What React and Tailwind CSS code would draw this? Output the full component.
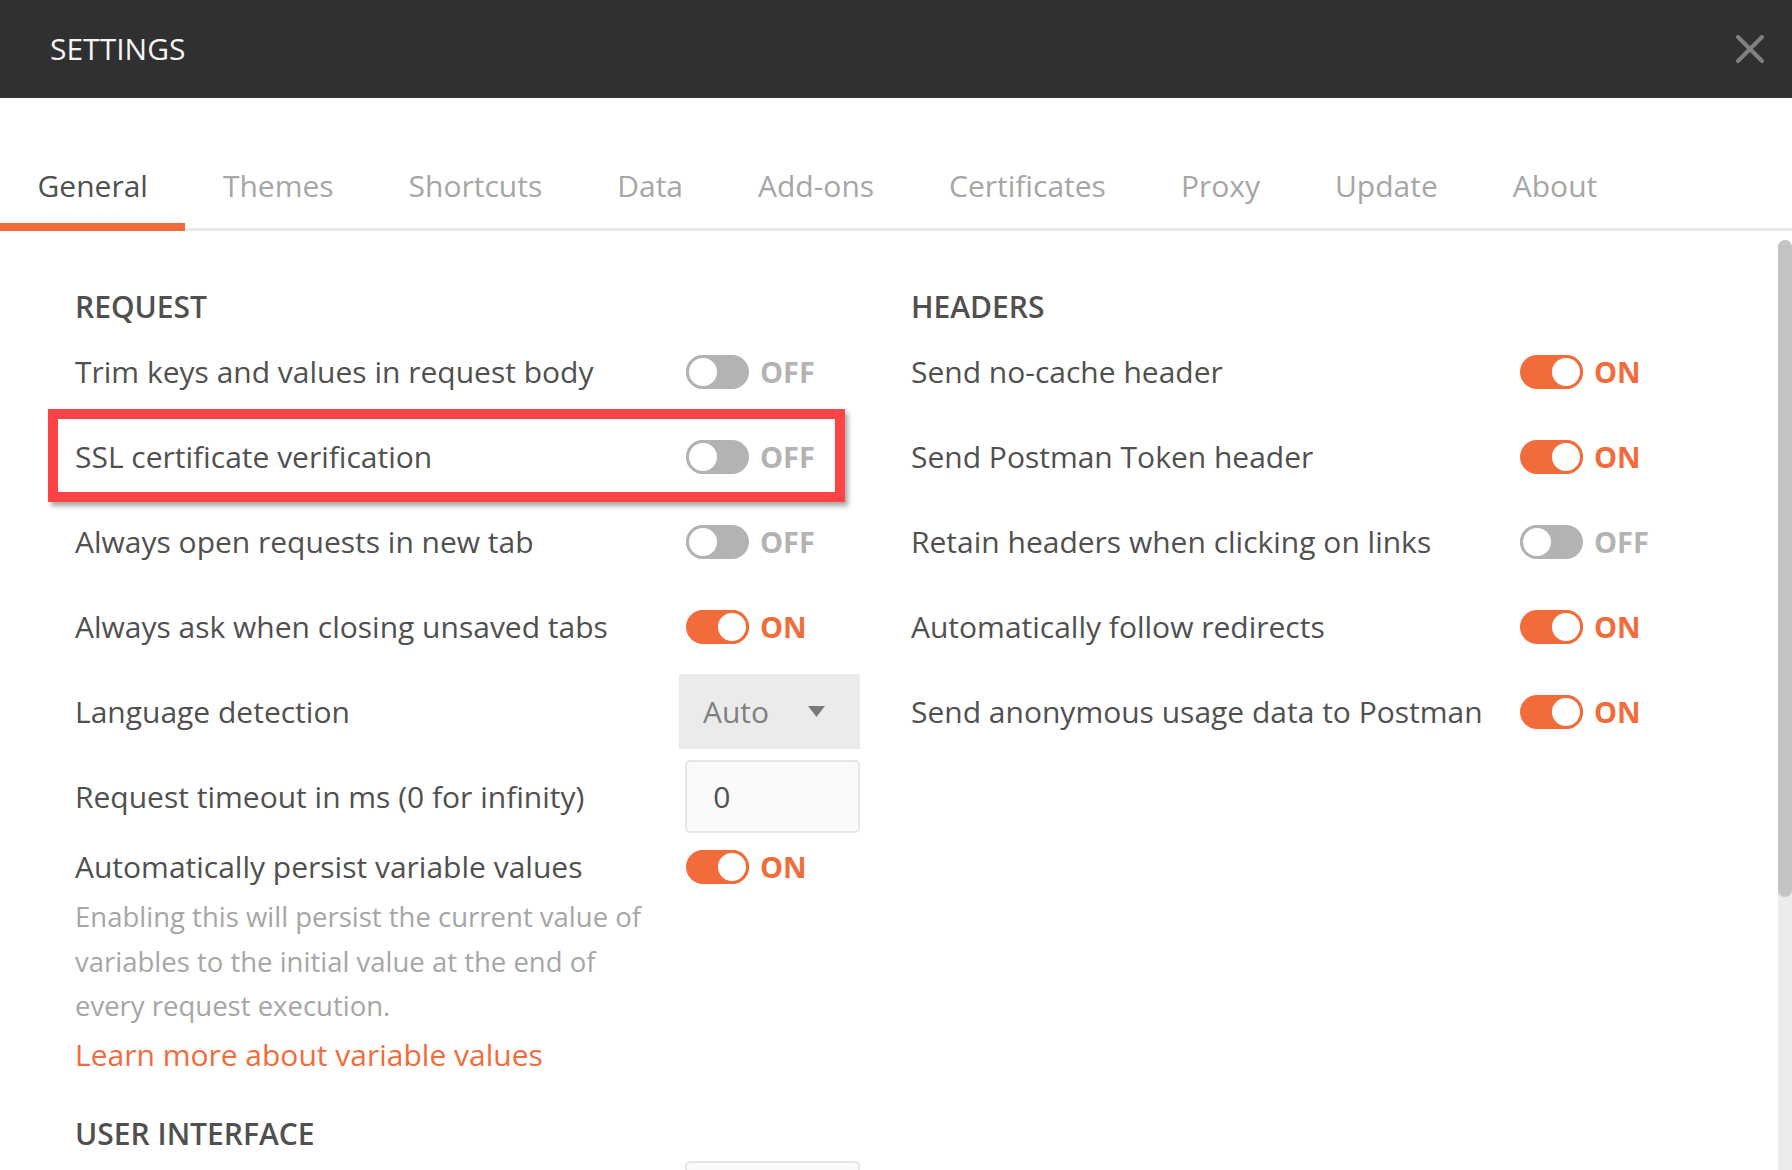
import React from "react";

function Toggle({ on }) {
  return (
    <div className="flex items-center">
      {on ? (
        <div className="flex h-[34px] w-[63px] items-center justify-end rounded-full bg-[#f26b3a]">
          <div className="h-[34px] w-[34px] rounded-full border-[3px] border-[#f26b3a] bg-white" />
        </div>
      ) : (
        <div className="flex h-[34px] w-[63px] items-center justify-start rounded-full bg-[#b3b3b3]">
          <div className="h-[34px] w-[34px] rounded-full border-[3px] border-[#b3b3b3] bg-white" />
        </div>
      )}
      <span
        className={
          "ml-[11px] text-[29px] font-bold leading-none " +
          (on ? "text-[#f26b3a]" : "text-[#b3b3b3]")
        }
      >
        {on ? "ON" : "OFF"}
      </span>
    </div>
  );
}

function LeftRow({ label, children, highlight }) {
  return (
    <div className="relative flex h-[85px] items-center">
      <div className="w-[611px] text-[30px] leading-[40px] text-[#505050]">{label}</div>
      {children}
      {highlight && (
        <div className="pointer-events-none absolute left-[-27px] top-[-5px] h-[93px] w-[797px] border-[10px] border-[#fd4346] shadow-[3px_4px_5px_rgba(0,0,0,0.35)]" />
      )}
    </div>
  );
}

function RightRow({ label, on }) {
  return (
    <div className="flex h-[85px] items-center">
      <div className="w-[609px] text-[30px] leading-[40px] text-[#505050]">{label}</div>
      <Toggle on={on} />
    </div>
  );
}

const tabs = ["General", "Themes", "Shortcuts", "Data", "Add-ons", "Certificates", "Proxy", "Update", "About"];

export default function App() {
  return (
    <div className="h-[1170px] w-[1792px] overflow-hidden bg-white font-['Open_Sans',sans-serif]">
      {/* Title bar */}
      <div className="flex h-[98px] items-center justify-between bg-[#303030] pl-[50px] pr-[27px]">
        <div className="mb-[1px] text-[30px] leading-none text-[#f4f4f4]">SETTINGS</div>
        <svg width="30" height="30" viewBox="0 0 30 30">
          <path d="M3 3 L27 27 M27 3 L3 27" stroke="#818181" strokeWidth="4" strokeLinecap="round" />
        </svg>
      </div>

      {/* Tabs */}
      <div className="flex border-b-[3px] border-[#e8e8e8] pt-[68px]">
        {tabs.map((t, i) => (
          <div
            key={t}
            className={
              "mb-[-3px] px-[37.5px] pb-[17px] text-[30px] leading-[40px] " +
              (i === 0
                ? "border-b-[8px] border-[#f26b3a] text-[#505050]"
                : "border-b-[8px] border-transparent text-[#a6a6a6]")
            }
          >
            {t}
          </div>
        ))}
      </div>

      {/* Body */}
      <div className="flex">
        <div className="flex flex-1 pl-[75px] pt-[56px]">
          {/* Left column */}
          <div className="w-[785px]">
            <div className="text-[30px] font-semibold leading-[40px] text-[#505050]">REQUEST</div>
            <div className="mt-[2px]">
              <LeftRow label="Trim keys and values in request body">
                <Toggle on={false} />
              </LeftRow>
              <LeftRow label="SSL certificate verification" highlight>
                <Toggle on={false} />
              </LeftRow>
              <LeftRow label="Always open requests in new tab">
                <Toggle on={false} />
              </LeftRow>
              <LeftRow label="Always ask when closing unsaved tabs">
                <Toggle on />
              </LeftRow>
              <LeftRow label="Language detection">
                <div className="ml-[-7px] flex h-[75px] w-[181px] items-center justify-between bg-[#ebebeb] pl-[24px] pr-[35px]">
                  <span className="text-[30px] leading-none text-[#808080]">Auto</span>
                  <svg width="17" height="11" viewBox="0 0 17 11">
                    <path d="M0 0 H17 L8.5 11 Z" fill="#7a7a7a" />
                  </svg>
                </div>
              </LeftRow>
              <LeftRow label="Request timeout in ms (0 for infinity)">
                <div className="flex h-[73px] w-[175px] items-center rounded-[5px] border-[2px] border-[#e6e6e6] bg-[#fafafa] pl-[26px]">
                  <span className="text-[30px] leading-none text-[#505050]">0</span>
                </div>
              </LeftRow>
              <div className="flex h-[54px] items-center pt-[1px]">
                <div className="w-[611px] text-[30px] leading-[40px] text-[#505050]">
                  Automatically persist variable values
                </div>
                <Toggle on />
              </div>
              <div className="mt-[2px] text-[27.5px] leading-[44.5px] text-[#a6a6a6]">
                Enabling this will persist the current value of
                <br />
                variables to the initial value at the end of
                <br />
                every request execution.
              </div>
              <div className="mt-[4px] text-[30px] leading-[44px] text-[#f26b3a]">
                Learn more about variable values
              </div>
              <div className="mt-[37px] text-[30px] font-semibold leading-[40px] text-[#505050]">
                USER INTERFACE
              </div>
              <div className="mt-[7px] flex">
                <div className="w-[611px]" />
                <div className="h-[73px] w-[175px] rounded-[5px] border-[2px] border-[#e6e6e6] bg-[#fafafa]" />
              </div>
            </div>
          </div>

          {/* Right column */}
          <div className="ml-[51px]">
            <div className="text-[30px] font-semibold leading-[40px] text-[#505050]">HEADERS</div>
            <div className="mt-[2px]">
              <RightRow label="Send no-cache header" on />
              <RightRow label="Send Postman Token header" on />
              <RightRow label="Retain headers when clicking on links" on={false} />
              <RightRow label="Automatically follow redirects" on />
              <RightRow label="Send anonymous usage data to Postman" on />
            </div>
          </div>
        </div>

        {/* Scrollbar */}
        <div className="mt-[9px] flex h-[940px] w-[14px] flex-col rounded-full bg-[#ebebeb]">
          <div className="h-[657px] w-[14px] rounded-full bg-[#c4c4c4]" />
        </div>
      </div>
    </div>
  );
}
